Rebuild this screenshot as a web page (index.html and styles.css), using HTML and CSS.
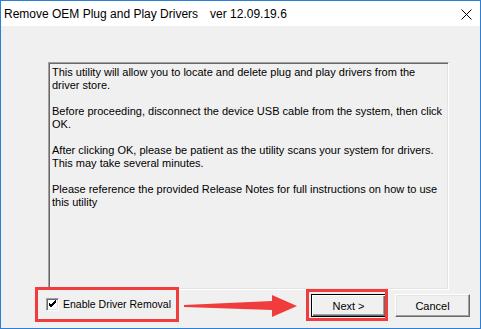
FILE: index.html
```html
<!DOCTYPE html>
<html lang="en">
<head>
    <meta charset="UTF-8">
    <title>Remove OEM Plug and Play Drivers</title>
    <link rel="stylesheet" href="styles.css">
</head>
<body>
    <div class="window">
        <div class="titlebar">
            <span class="title">Remove OEM Plug and Play Drivers</span>
            <span class="version">ver 12.09.19.6</span>
            <svg class="close" width="11" height="11" viewBox="0 0 11 11">
                <path d="M0.5 0.5 L10.5 10.5 M10.5 0.5 L0.5 10.5" stroke="#000" stroke-width="1" fill="none"/>
            </svg>
        </div>

        <div class="client">
            <div class="textbox">
                <p>This utility will allow you to locate and delete plug and play drivers from the<br>driver store.</p>
                <p>Before proceeding, disconnect the device USB cable from the system, then click<br>OK.</p>
                <p>After clicking OK, please be patient as the utility scans your system for drivers.<br>This may take several minutes.</p>
                <p>Please reference the provided Release Notes for full instructions on how to use<br>this utility</p>
            </div>

            <div class="footer">
                <label class="check">
                    <span class="box">
                        <svg width="9" height="9" viewBox="0 0 9 9">
                            <path d="M1 4 L3 6 L8 1 M1 5 L3 7 L8 2 M1 3 L3 5 L8 0" stroke="#000" stroke-width="1" fill="none"/>
                        </svg>
                    </span>
                    Enable Driver Removal
                </label>
                <div class="buttons">
                    <button class="btn default">Next &gt;</button>
                    <button class="btn">Cancel</button>
                </div>
            </div>
        </div>

        <!-- red annotations drawn over the dialog -->
        <svg class="marks" width="481" height="329" viewBox="0 0 481 329">
            <rect x="36.5" y="288.5" width="141" height="32" fill="none" stroke="#f03c3c" stroke-width="3"/>
            <rect x="307.5" y="290.5" width="79" height="29" fill="none" stroke="#f03c3c" stroke-width="3"/>
            <polygon points="184,305 272,301 272,295 297,306 272,317 272,310 184,307" fill="#f03c3c"/>
        </svg>
    </div>
</body>
</html>
```

FILE: styles.css
```css
* {
    margin: 0;
    padding: 0;
    box-sizing: border-box;
}

body {
    background: #f0f0f0;
    font-family: 'Liberation Sans', Arial, sans-serif;
    color: #000;
}

.window {
    position: relative;
    width: 481px;
    height: 329px;
    border: 1px solid #2b7fd6;
    display: flex;
    flex-direction: column;
    background: #f0f0f0;
}

.titlebar {
    height: 25px;
    background: #fff;
    display: flex;
    align-items: center;
    padding-left: 3px;
    font-size: 12px;
}

.version {
    margin-left: 12px;
}

.close {
    margin-left: auto;
    margin-right: 8px;
    margin-top: 2px;
}

.client {
    flex: 1;
    display: flex;
    flex-direction: column;
}

.textbox {
    width: 401px;
    height: 228px;
    margin: 36px 0 0 47px;
    padding: 3px 3px 0 3px;
    border: 1px solid;
    border-color: #a0a0a0 #fff #fff #a0a0a0;
    box-shadow: inset 1px 1px 0 #696969, inset -1px -1px 0 #e3e3e3;
    font-size: 11px;
    line-height: 13px;
}

.textbox p {
    margin-bottom: 13px;
}

.footer {
    display: flex;
    align-items: center;
    margin-top: 4px;
    padding: 0 10px 0 45px;
}

.check {
    display: flex;
    align-items: center;
    gap: 4px;
    font-size: 10.5px;
    margin-top: -3px;
}

.box {
    width: 13px;
    height: 13px;
    background: #fff;
    border: 1px solid;
    border-color: #a0a0a0 #fff #fff #a0a0a0;
    box-shadow: inset 1px 1px 0 #696969, inset -1px -1px 0 #e3e3e3;
    display: flex;
    align-items: center;
    justify-content: center;
}

.buttons {
    margin-left: auto;
    display: flex;
    gap: 9px;
}

.btn {
    width: 75px;
    height: 23px;
    background: #f0f0f0;
    font-family: 'Liberation Sans', Arial, sans-serif;
    font-size: 11px;
    color: #000;
    border: 1px solid;
    border-color: #fff #696969 #696969 #fff;
    box-shadow: inset -1px -1px 0 #a0a0a0, inset 1px 1px 0 #e3e3e3;
}

.btn.default {
    border-color: #000;
    box-shadow: inset 1px 1px 0 #fff, inset -1px -1px 0 #696969, inset -2px -2px 0 #a0a0a0;
}

.marks {
    position: absolute;
    top: -1px;
    left: -1px;
    pointer-events: none;
}
```
